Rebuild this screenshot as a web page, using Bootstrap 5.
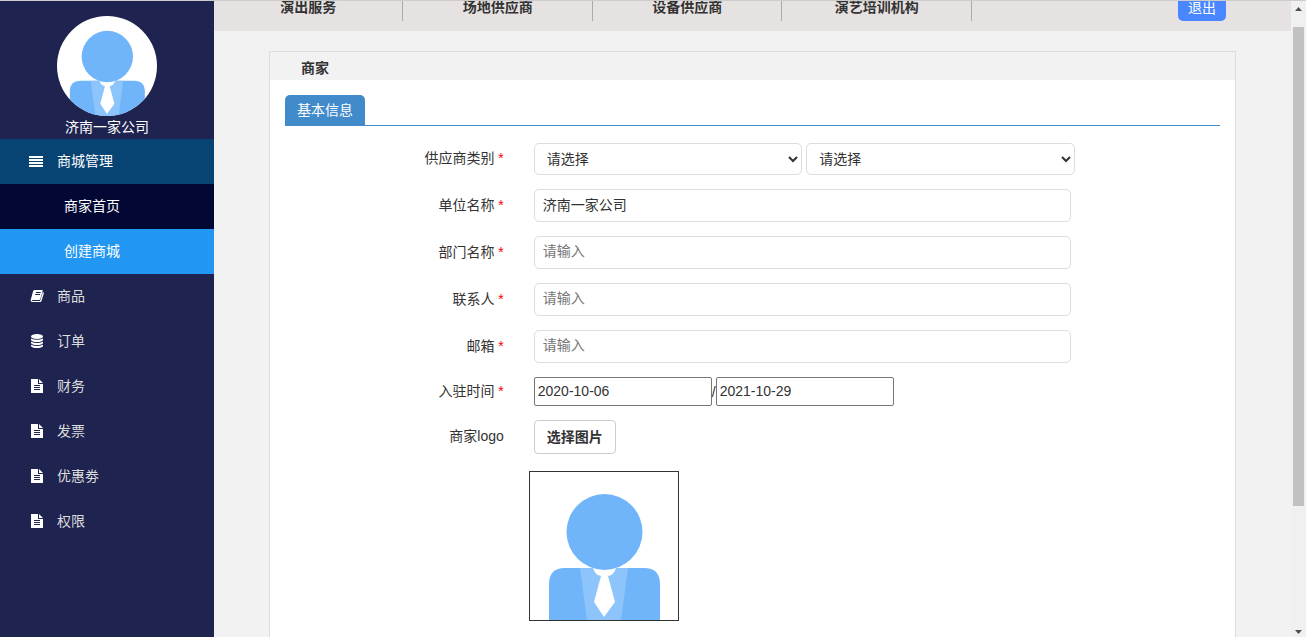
<!DOCTYPE html>
<html lang="zh-CN">
<head>
<meta charset="utf-8">
<meta name="viewport" content="width=device-width, initial-scale=1">
<title>商家</title>
<link href="https://cdn.jsdelivr.net/npm/bootstrap@5.3.0/dist/css/bootstrap.min.css" rel="stylesheet">
<style>
  body { font: 14px/20px "Liberation Sans", "Noto Sans CJK SC", sans-serif; color: #333; background: #f2f2f2; }
  a { text-decoration: none; }
  .shell { border-top: 1px solid #ccc; }
  .side { width: 214px; background: #1e2350; padding-top: 15px; }
  .avatar { width: 100px; height: 100px; background: #fff; }
  .company { height: 23px; line-height: 23px; }
  .side-link { height: 45px; color: #ddd; padding: 0 0 2px 29px; gap: 12px; }
  .side-link svg { width: 16px; height: 16px; fill: #fff; }
  .side-link.opened { background: #084473; color: #fff; }
  .side-link.sub { background: #020833; color: #fff; padding-left: 64px; }
  .side-link.sub.current { background: #2196f3; }
  .topbar { display: grid; grid-template: 20px / repeat(4, 19fr) 32fr; align-items: end; height: 30px; background: #e6e2e1; }
  .topbar > * { height: 28px; line-height: 28px; }
  .topbar a { color: #333; border-right: 1px solid #aaa; }
  .logout { width: 48px; margin-right: 65px; padding: 0; border: 0; border-radius: 5px; background: #4a86ff; color: #fff; line-height: 30px; }
  .panel { margin: 20px 55px 0; border: 1px solid #ddd; border-bottom: 0; background: #fff; }
  .panel-title { height: 28px; line-height: 32px; padding-left: 31px; font-size: 14px; background: #f2f2f2; }
  .panel-content { padding: 15px; }
  .tabs { border-bottom: 1px solid #428bca; }
  .tab { height: 30px; padding: 0 12px; border: 0; border-radius: 5px 5px 0 0; background: #428bca; color: #fff; }
  .fields { padding-top: 17px; }
  .fields .row { --bs-gutter-x: 30px; margin: 0 0 14px; }
  .field-label { padding-bottom: 2px; text-align: right; }
  .star { color: #f00; }
  .fields input, .fields select { color: #333; background: #fff; }
  .fields ::placeholder { color: #757575; opacity: 1; }
  .kind { width: 40%; height: 32px; padding: 0 8px; border: 1px solid #ddd; border-radius: 5px; }
  .entry { width: 80%; height: 33px; padding: 0 8px 3px; border: 1px solid #ddd; border-radius: 5px; }
  .day { width: 178px; height: 29px; padding: 0 3px 2px; border: 1px solid #767676; border-radius: 2px; }
  .pick { height: 34px; padding: 0 12px; border: 1px solid #ccc; border-radius: 4px; background: #fff; color: #333; font-weight: bold; }
  .fields .preview { padding: 3px 10px 0; }
  .preview svg { width: 150px; height: 150px; border: 1px solid #333; }
  .scroll { width: 15px; background: #f0f0f0; }
  .scroll svg { width: 15px; height: 15px; fill: #505050; }
  .thumb { flex: 479 1 0; margin: 11px 2px 0; background: #c1c1c1; }
  .rest { flex: 116 1 0; }
</style>
</head>
<body>
<svg class="d-none" aria-hidden="true">
  <symbol id="person" viewBox="1 1 148 148">
    <path fill="#70b5f9" d="M20 150V113q0-16 16-16h79q16 0 16 16v37z"/>
    <path fill="#8cc4fb" d="M51 97h48l-7 53H58z"/>
    <path fill="#fff" d="M64 97q2 7 8 8l-7 26 10 15 11-15-7-26q6-1 8-8z"/>
    <circle cx="75.500" cy="61" r="38" fill="#70b5f9"/>
  </symbol>
  <symbol id="lines" viewBox="0 0 16 16"><path d="M0 3h14v2H0zM0 6h14v2H0zM0 9h14v2H0zM0 12h14v2H0z"/></symbol>
  <symbol id="book" viewBox="0 0 16 16"><path fill-rule="evenodd" d="M5.500 2H13q1 0 .7 1l-2.400 8q-.3 1-1.300 1H3.500q-.7 0-.6.6t.8.400h6.600q.8 0 1-.7L13.900 4q1.200.4.900 1.400l-2.200 7.400Q12.200 14 11 14H3.200Q1.400 14 1.700 12L4 3.500Q4.300 2 5.500 2zM7 4l-.3 1h4.800l.3-1zM6.400 6l-.3 1h4.800l.3-1z"/></symbol>
  <symbol id="stack" viewBox="0 0 16 16"><ellipse cx="8" cy="3.500" rx="6" ry="2.500"/><path d="M2 5.500q6 2.500 12 0V7q-1 2-6 2T2 7zM2 8.700q6 2.500 12 0V10q-1 2-6 2t-6-2zM2 11.700q6 2.500 12 0V13q-1 2-6 2t-6-2z"/></symbol>
  <symbol id="doc" viewBox="0 0 16 16"><path fill-rule="evenodd" d="M2 1h7v5h5v9H2zM10 1l4 4h-4zM5 7v1h6V7zM5 9v1h6V9zM5 11v1h6v-1z"/></symbol>
</svg>

<div class="shell d-flex vh-100 overflow-hidden">
  <aside class="side flex-shrink-0">
    <svg class="avatar d-block mx-auto rounded-circle" role="img" aria-label="头像"><use href="#person"/></svg>
    <div class="company text-center text-white">济南一家公司</div>
    <nav>
      <a href="#" class="side-link opened d-flex align-items-center"><svg><use href="#lines"/></svg>商城管理</a>
      <a href="#" class="side-link sub d-flex align-items-center">商家首页</a>
      <a href="#" class="side-link sub current d-flex align-items-center">创建商城</a>
      <a href="#" class="side-link d-flex align-items-center"><svg><use href="#book"/></svg>商品</a>
      <a href="#" class="side-link d-flex align-items-center"><svg><use href="#stack"/></svg>订单</a>
      <a href="#" class="side-link d-flex align-items-center"><svg><use href="#doc"/></svg>财务</a>
      <a href="#" class="side-link d-flex align-items-center"><svg><use href="#doc"/></svg>发票</a>
      <a href="#" class="side-link d-flex align-items-center"><svg><use href="#doc"/></svg>优惠劵</a>
      <a href="#" class="side-link d-flex align-items-center"><svg><use href="#doc"/></svg>权限</a>
    </nav>
  </aside>

  <div class="d-flex flex-column flex-grow-1 overflow-hidden">
    <header class="topbar flex-shrink-0 overflow-hidden text-center">
      <a href="#" class="fw-bold">演出服务</a>
      <a href="#" class="fw-bold">场地供应商</a>
      <a href="#" class="fw-bold">设备供应商</a>
      <a href="#" class="fw-bold">演艺培训机构</a>
      <button type="button" class="logout ms-auto">退出</button>
    </header>

    <main class="panel flex-grow-1">
      <h1 class="panel-title fw-bold mb-0">商家</h1>
      <div class="panel-content">
        <div class="tabs d-flex"><button type="button" class="tab">基本信息</button></div>
        <form class="fields">
          <div class="row align-items-center">
            <label class="col-3 field-label" for="kind1">供应商类别 <span class="star">*</span></label>
            <div class="col-9 d-flex gap-1">
              <select id="kind1" class="kind"><option>请选择</option></select>
              <select class="kind" aria-label="供应商子类别"><option>请选择</option></select>
            </div>
          </div>
          <div class="row align-items-center">
            <label class="col-3 field-label" for="unit">单位名称 <span class="star">*</span></label>
            <div class="col-9 d-flex"><input id="unit" class="entry" type="text" value="济南一家公司"></div>
          </div>
          <div class="row align-items-center">
            <label class="col-3 field-label" for="dept">部门名称 <span class="star">*</span></label>
            <div class="col-9 d-flex"><input id="dept" class="entry" type="text" placeholder="请输入"></div>
          </div>
          <div class="row align-items-center">
            <label class="col-3 field-label" for="contact">联系人 <span class="star">*</span></label>
            <div class="col-9 d-flex"><input id="contact" class="entry" type="text" placeholder="请输入"></div>
          </div>
          <div class="row align-items-center">
            <label class="col-3 field-label" for="mail">邮箱 <span class="star">*</span></label>
            <div class="col-9 d-flex"><input id="mail" class="entry" type="text" placeholder="请输入"></div>
          </div>
          <div class="row align-items-center">
            <label class="col-3 field-label" for="from">入驻时间 <span class="star">*</span></label>
            <div class="col-9 d-flex align-items-center"><input id="from" class="day" type="text" value="2020-10-06">/<input class="day" type="text" aria-label="结束时间" value="2021-10-29"></div>
          </div>
          <div class="row align-items-center">
            <label class="col-3 field-label" for="logo">商家logo</label>
            <div class="col-9 d-flex"><button id="logo" type="button" class="pick">选择图片</button></div>
          </div>
          <div class="row">
            <div class="col-9 offset-3 preview"><svg class="d-block" role="img" aria-label="商家logo"><use href="#person"/></svg></div>
          </div>
        </form>
      </div>
    </main>
  </div>

  <div class="scroll d-flex flex-column flex-shrink-0" aria-hidden="true">
    <svg viewBox="0 0 15 15"><path d="M4 10h7L7.500 6z"/></svg>
    <div class="thumb"></div>
    <div class="rest"></div>
    <svg viewBox="0 0 15 15"><path d="M4 8h7l-3.500 4z"/></svg>
  </div>
</div>
<script src="https://cdn.jsdelivr.net/npm/bootstrap@5.3.0/dist/js/bootstrap.bundle.min.js"></script>
</body>
</html>
